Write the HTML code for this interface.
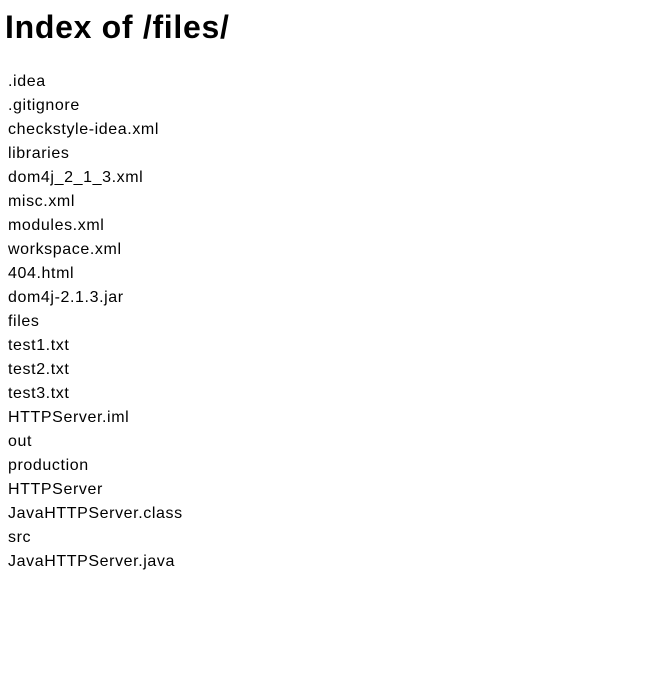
<!DOCTYPE html>
<html>
<head>
<meta charset="utf-8">
<style>
  html,body{margin:0;padding:0;background:#fff;width:652px;height:676px;overflow:hidden;}
  body{font-family:"Liberation Sans",Arial,sans-serif;color:#000;}
  h1{position:absolute;left:5px;top:7px;margin:0;font-size:32px;line-height:40px;font-weight:bold;letter-spacing:0.7px;}
  ul{position:absolute;left:8px;top:70px;margin:0;padding:0;list-style:none;font-size:16px;line-height:24px;letter-spacing:0.6px;}
</style>
</head>
<body>
<h1>Index of /files/</h1>
<ul>
<li>.idea</li>
<li>.gitignore</li>
<li>checkstyle-idea.xml</li>
<li>libraries</li>
<li>dom4j_2_1_3.xml</li>
<li>misc.xml</li>
<li>modules.xml</li>
<li>workspace.xml</li>
<li>404.html</li>
<li>dom4j-2.1.3.jar</li>
<li>files</li>
<li>test1.txt</li>
<li>test2.txt</li>
<li>test3.txt</li>
<li>HTTPServer.iml</li>
<li>out</li>
<li>production</li>
<li>HTTPServer</li>
<li>JavaHTTPServer.class</li>
<li>src</li>
<li>JavaHTTPServer.java</li>
</ul>
</body>
</html>
